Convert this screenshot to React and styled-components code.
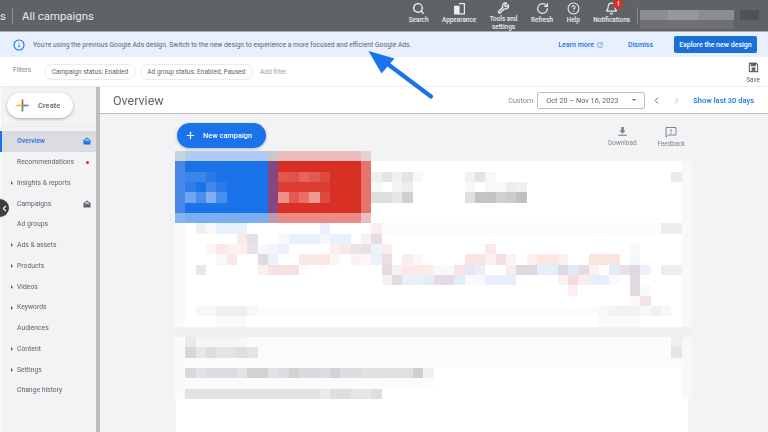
import styled, { createGlobalStyle } from 'styled-components';
import {
  Search, Wrench, RotateCw, CircleHelp, Bell, Info, SquareArrowOutUpRight,
  ChevronLeft, ChevronRight, Plus,
} from 'lucide-react';

const Global = createGlobalStyle`
  html, body { margin: 0; padding: 0; height: 432px; overflow: hidden; background: #fff; }
  * { box-sizing: border-box; }
`;

const Page = styled.div`
  position: relative;
  width: 768px;
  height: 432px;
  display: flex;
  flex-direction: column;
  overflow: hidden;
  font-family: Roboto, "Liberation Sans", sans-serif;
  color: #5f6368;
  filter: blur(0.6px);
`;

const TopBar = styled.header`
  height: 32px;
  flex: none;
  display: flex;
  align-items: stretch;
  background: #5f6368;
  border-bottom: 1px solid #a9acb0;
  color: #e8eaed;
`;

const Crumb = styled.div`
  display: flex;
  align-items: center;
  font-size: 11.4px;
  height: 31px;
`;

const CrumbCut = styled.span`
  width: 12px;
`;

const CrumbLine = styled.i`
  width: 1px;
  height: 16px;
  background: #8b8e92;
  margin-right: 9px;
`;

const TopActions = styled.nav`
  margin-left: auto;
  display: flex;
  gap: 13.5px;
  padding-top: 2px;
`;

const TopAction = styled.div`
  position: relative;
  display: flex;
  flex-direction: column;
  align-items: center;
  font-size: 6.4px;
  line-height: 7.5px;
  font-weight: 500;
  text-align: center;
  color: #eceef0;
  svg { margin-bottom: 2px; }
`;

const Badge = styled.b`
  position: absolute;
  top: -3px;
  left: 20px;
  width: 10px;
  height: 10px;
  border-radius: 50%;
  background: #d93025;
  color: #fff;
  font-size: 7px;
  line-height: 10px;
`;

const TopDivider = styled.i`
  width: 1px;
  height: 17px;
  margin: 7px 0 0 7px;
  background: #85888c;
`;

const Account = styled.svg`
  width: 130px;
  height: 24px;
  margin-top: 6px;
  flex: none;
`;

const Banner = styled.div`
  height: 25px;
  flex: none;
  display: flex;
  align-items: center;
  padding: 0 11px 0 13px;
  background: #e8f0fe;
  font-size: 6.75px;
`;

const BannerText = styled.span`
  margin-left: 8px;
  flex: 1;
`;

const BannerLink = styled.a`
  display: flex;
  align-items: center;
  gap: 3px;
  color: #1a73e8;
  font-size: 7px;
  font-weight: 500;
  margin-right: ${p => p.$gap}px;
`;

const PrimaryButton = styled.button`
  width: 83px;
  height: 17px;
  padding: 0;
  border: 0;
  border-radius: 2px;
  background: #1a6fd8;
  color: #fff;
  font: 500 7px Roboto, sans-serif;
`;

const FilterBar = styled.div`
  height: 30px;
  flex: none;
  display: flex;
  align-items: center;
  padding: 0 8px 0 13px;
  background: #fff;
  border-bottom: 1px solid #eceef0;
  font-size: 6.6px;
`;

const FilterLabel = styled.span`
  color: #80868b;
  margin: -3px 13px 0 0;
`;

const Chip = styled.span`
  height: 16px;
  display: flex;
  align-items: center;
  padding: 0 6.5px;
  margin-right: 4px;
  border: 1px solid #e8eaed;
  border-radius: 8px;
  white-space: nowrap;
`;

const AddFilter = styled.span`
  margin-left: 3px;
  color: #a0a4a8;
`;

const IconAction = styled.div`
  display: flex;
  flex-direction: column;
  align-items: center;
  gap: 2px;
  font-size: 6.4px;
  line-height: 8px;
  color: #80868b;
`;

const SaveAction = styled(IconAction)`
  margin-left: auto;
  gap: 3px;
  padding-top: 2px;
  color: #5f6368;
`;

const Body = styled.div`
  flex: 1;
  min-height: 0;
  display: flex;
`;

const Sidebar = styled.aside`
  position: relative;
  width: 100px;
  flex: none;
  padding-top: 6px;
  background: #f1f3f4;
  border-left: 1px solid #fafafa;
  border-right: 4px solid #bdbdbd;
`;

const CreateButton = styled.div`
  width: 66px;
  height: 25px;
  margin-left: 6px;
  display: flex;
  align-items: center;
  gap: 9px;
  padding-left: 9px;
  border-radius: 13px;
  background: #fff;
  box-shadow: 0 1px 3px rgba(60, 64, 67, 0.4);
  font-size: 7.6px;
  font-weight: 500;
`;

const NavList = styled.ul`
  list-style: none;
  margin: 8px 0 0;
  padding: 4px 0 0;
  border-top: 1px solid #e9ebec;
`;

const NavItem = styled.li`
  position: relative;
  height: 20.75px;
  display: flex;
  align-items: center;
  padding: 0 5px 0 16px;
  font-size: 6.8px;
  font-weight: ${p => (p.$active ? 500 : 400)};
  color: ${p => (p.$active ? '#1a73e8' : '#5f6368')};
  background: ${p => (p.$active ? '#dadce0' : 'transparent')};
  ${p => p.$active && `
    &::before {
      content: '';
      position: absolute;
      left: -1px;
      top: 0;
      bottom: 0;
      width: 2px;
      background: #1a73e8;
    }
  `}
`;

const Caret = styled.i`
  position: absolute;
  left: 10px;
  top: 8.5px;
  border-left: 2.5px solid #5f6368;
  border-top: 2px solid transparent;
  border-bottom: 2px solid transparent;
`;

const NavEnd = styled.span`
  margin-left: auto;
  display: flex;
  align-items: center;
`;

const Dot = styled.i`
  width: 3px;
  height: 3px;
  margin-right: 2px;
  border-radius: 50%;
  background: #d93025;
`;

const CollapseHandle = styled.div`
  position: absolute;
  left: -10px;
  top: 112px;
  width: 18px;
  height: 18px;
  display: flex;
  align-items: center;
  justify-content: flex-end;
  border-radius: 50%;
  background: #3c4043;
  color: #fff;
`;

const Main = styled.main`
  flex: 1;
  min-width: 0;
  display: flex;
  flex-direction: column;
  background: #f1f3f4;
`;

const MainHeader = styled.div`
  height: 27px;
  flex: none;
  display: flex;
  align-items: center;
  padding: 0 14px 0 13px;
  background: #fff;
  border-bottom: 1px solid #bdbdbd;
`;

const Title = styled.h1`
  margin: 0 auto 0 0;
  font-size: 12.5px;
  font-weight: 400;
  color: #5f6368;
`;

const DateHint = styled.span`
  font-size: 7.2px;
  color: #80868b;
  margin-right: 4px;
`;

const DateSelect = styled.div`
  width: 108px;
  height: 17px;
  display: flex;
  align-items: center;
  justify-content: space-between;
  padding: 0 8px;
  border: 1px solid #bdc1c6;
  border-radius: 2px;
  font-size: 7.3px;
`;

const SelectCaret = styled.i`
  border-top: 2.5px solid #5f6368;
  border-left: 2.5px solid transparent;
  border-right: 2.5px solid transparent;
`;

const Pager = styled.div`
  display: flex;
  gap: 9px;
  margin: 0 11px 0 6px;
  color: #5f6368;
  svg:last-child { color: #bdc1c6; }
`;

const LastDays = styled.a`
  font-size: 7.5px;
  font-weight: 500;
  color: #1a73e8;
`;

const Report = styled.section`
  flex: 1;
  min-height: 0;
  width: 517px;
  margin-left: 75px;
  display: flex;
  flex-direction: column;
`;

const ReportTools = styled.div`
  height: 37px;
  flex: none;
  display: flex;
  align-items: flex-start;
  padding: 9px 7px 0 2px;
`;

const NewCampaign = styled.div`
  width: 89px;
  height: 25px;
  display: flex;
  align-items: center;
  gap: 7px;
  padding-left: 8px;
  margin-right: auto;
  border-radius: 13px;
  background: #1a73e8;
  box-shadow: 0 1px 3px rgba(60, 64, 67, 0.35);
  color: #fff;
  font-size: 7.4px;
  font-weight: 500;
`;

const ToolGroup = styled.div`
  display: flex;
  gap: 21px;
  padding-top: 3px;
`;

const Mosaic = styled.svg`
  display: block;
  flex: none;
  width: 517px;
  height: 248px;
  filter: blur(0.4px);
`;

const ReportTail = styled.div`
  flex: 1;
  margin: 0 4px 0 1px;
  background: #fff;
`;

const Arrow = styled.svg`
  position: absolute;
  left: 360px;
  top: 44px;
  width: 80px;
  height: 60px;
`;

const mosaic = [
  [0, [[0, 1, '#c9d3e0'], [1, 8, '#b0ccf0'], [9, 1, '#c8c8c8'], [10, 8, '#ecbcbc'], [18, 1, '#e8d0d0'], [19, 31, '#f3f4f5']]],
  [1, [[0, 1, '#4a88e8'], [1, 8, '#1a73e8'], [9, 1, '#84477f'], [10, 8, '#d93025'], [18, 1, '#e8736b']]],
  [2, [[0, 1, '#4a88e8'], [1, 2, '#3b86ea'], [3, 1, '#2a7ae8'], [4, 5, '#1a73e8'], [9, 1, '#84477f'], [10, 1, '#e4574e'], [11, 1, '#e25249'], [12, 1, '#e5645b'], [13, 1, '#e35a50'], [14, 1, '#de4a40'], [15, 3, '#d93025'], [18, 1, '#e8736b'], [19, 1, '#f0f0f0'], [20, 1, '#e4e4e6'], [21, 1, '#f0f0f0'], [22, 1, '#e4e4e4'], [23, 1, '#f8f8f8'], [28, 1, '#f2f2f2'], [29, 1, '#e4e4e4'], [30, 1, '#f8f8f8'], [48, 1, '#ebebed']]],
  [3, [[0, 1, '#4a88e8'], [1, 1, '#2f7cea'], [2, 1, '#1a73e8'], [3, 1, '#3f87e8'], [4, 1, '#2a7ae8'], [5, 4, '#1a73e8'], [9, 1, '#84477f'], [10, 5, '#dc3d33'], [15, 3, '#d93025'], [18, 1, '#e8736b'], [19, 1, '#f8f8f8'], [21, 1, '#f3f3f3'], [22, 1, '#ededed'], [28, 1, '#f8f8f8'], [30, 2, '#f7f8f7'], [32, 1, '#eeeeee'], [33, 1, '#f0f0f0']]],
  [4, [[0, 1, '#4a88e8'], [1, 1, '#6fa5f0'], [2, 1, '#4a8eec'], [3, 1, '#80aff2'], [4, 1, '#4a8eec'], [5, 4, '#1a73e8'], [9, 1, '#84477f'], [10, 1, '#ee9088'], [11, 1, '#e45a50'], [12, 1, '#e87068'], [13, 1, '#ee9a90'], [14, 1, '#de4a40'], [15, 3, '#d93025'], [18, 1, '#e8736b'], [19, 2, '#dedede'], [21, 1, '#e6e6e6'], [22, 1, '#cfcfcf'], [28, 1, '#e0e0e2'], [29, 1, '#c4c4c6'], [30, 1, '#c4c2c2'], [31, 1, '#d0d0d2'], [32, 1, '#cccccc'], [33, 1, '#c0c0c4']]],
  [5, [[0, 1, '#4a88e8'], [1, 8, '#1a73e8'], [9, 1, '#84477f'], [10, 8, '#d93025'], [18, 1, '#e8736b']]],
  [6, [[0, 1, '#8ab4f0'], [1, 8, '#7baef3'], [9, 1, '#b99ab0'], [10, 8, '#ec8a84'], [18, 1, '#e8c0c0']]],
  [7, [[2, 1, '#f0f0f2'], [3, 1, '#f8f8f8'], [4, 3, '#e8f0fc'], [14, 1, '#eaf1fc'], [19, 1, '#fbeeee'], [20, 27, '#fcfcfc'], [47, 2, '#eeeef0']]],
  [8, [[6, 1, '#f8e8e6'], [7, 1, '#e4dfe3'], [10, 1, '#f8f8fc'], [11, 3, '#e8f0fc'], [14, 1, '#f4f6fc'], [15, 2, '#e8f0fc'], [18, 1, '#faf0f0'], [19, 1, '#e6dde0']]],
  [9, [[3, 1, '#fcf6f6'], [4, 1, '#fae8e6'], [5, 2, '#fcf0ee'], [7, 1, '#e8e2e6'], [8, 1, '#f8f9fc'], [9, 1, '#f2f6fc'], [10, 1, '#e8f0fc'], [15, 1, '#fceeee'], [16, 1, '#f8e8e6'], [17, 1, '#e8e4ec'], [18, 1, '#e8e0e4'], [19, 1, '#eef3fa'], [20, 1, '#fcecea'], [30, 1, '#fce8e6'], [44, 1, '#fcf8f8']]],
  [10, [[4, 1, '#f8f8f8'], [5, 1, '#fae8e6'], [8, 1, '#e0dade'], [9, 1, '#ecf2fc'], [12, 3, '#fae8e6'], [15, 1, '#fcf6f4'], [17, 1, '#fcf2f2'], [18, 1, '#fcf8f8'], [19, 1, '#eaf1fc'], [20, 1, '#ecdfe4'], [22, 1, '#fceeea'], [23, 1, '#fcf8f8'], [28, 2, '#f8e4e2'], [30, 1, '#fcf0ee'], [31, 1, '#f4dfe2'], [32, 1, '#fcf4f2'], [34, 1, '#fcf0ee'], [35, 2, '#fce6e2'], [37, 1, '#fcf0ec'], [40, 3, '#fae4e0'], [44, 1, '#f4f7fe']]],
  [11, [[2, 1, '#e8e8ea'], [8, 1, '#fcf0ee'], [9, 3, '#f4e2e2'], [12, 1, '#fcfcfc'], [20, 1, '#e4dce0'], [21, 1, '#faf0f0'], [22, 2, '#fce8e6'], [24, 1, '#fcecea'], [25, 2, '#f8f9fc'], [27, 1, '#f8e4e4'], [28, 1, '#e4e8f4'], [29, 1, '#e8effc'], [32, 1, '#f8ecec'], [33, 2, '#e0d8e0'], [35, 2, '#e4eefc'], [37, 1, '#e0dae0'], [38, 1, '#e0eafc'], [39, 1, '#e4dce4'], [40, 1, '#fcf0ee'], [42, 1, '#e4ecf8'], [43, 1, '#e8e0e4'], [44, 1, '#e0d8da'], [45, 1, '#ecf2fc'], [47, 2, '#eeeeee']]],
  [12, [[20, 1, '#faf0f0'], [21, 1, '#e4dce0'], [22, 2, '#e8f0fc'], [24, 1, '#e4ecf8'], [25, 2, '#e4dce4'], [27, 1, '#e4eefa'], [28, 2, '#fafafe'], [30, 3, '#e6effc'], [37, 1, '#fcf0f0'], [38, 1, '#f4dcdc'], [39, 1, '#fcecec'], [40, 2, '#e6effc'], [42, 1, '#f8fafe'], [44, 1, '#e2dae2']]],
  [13, [[38, 1, '#fcf0f0'], [44, 1, '#e2dae2'], [45, 1, '#f8fafe']]],
  [14, [[44, 1, '#fcf8f8'], [45, 1, '#f4e4e6']]],
  [15, [[2, 2, '#f6f8f6'], [4, 3, '#eeeff1'], [7, 1, '#f6f8f6'], [8, 33, '#fcfcfc'], [41, 1, '#f8f8f8'], [42, 3, '#f2f2f2'], [45, 1, '#f6f8f8'], [46, 1, '#eef0f2'], [47, 1, '#f6f8f8']]],
  [16, [[4, 3, '#f8f9f8'], [41, 4, '#f8f9f8']]],
  [17, [[0, 50, '#eef0f2']]],
  [18, [[1, 1, '#eaeaec'], [2, 5, '#f6f6f8'], [7, 41, '#fafbfa'], [48, 1, '#eeeef0']]],
  [19, [[1, 1, '#d8d8dc'], [2, 1, '#e8e8ea'], [3, 1, '#dcdce2'], [4, 2, '#e4e4e4'], [6, 1, '#dedede'], [7, 1, '#e4e4e6'], [8, 40, '#fafbfa'], [48, 1, '#e6e6ea']]],
  [20, [[1, 48, '#fbfbfb']]],
  [21, [[1, 1, '#d8d8e0'], [2, 1, '#e4e4e6'], [3, 3, '#dcdce2'], [6, 1, '#e4e4e4'], [7, 2, '#d4d0d4'], [9, 1, '#e4e4e6'], [10, 1, '#dcdce2'], [11, 1, '#d4d0d4'], [12, 2, '#dcdae0'], [14, 1, '#dcdce2'], [15, 1, '#d8d0d4'], [16, 2, '#dcdce2'], [18, 2, '#e2e2e2'], [20, 3, '#e0e0e0'], [23, 1, '#cfcfd2'], [24, 1, '#f0f0f2']]],
  [22, [[1, 24, '#fbfbfb']]],
  [23, [[1, 13, '#e2e2e2'], [14, 1, '#eaeaea'], [15, 2, '#dedede'], [17, 2, '#e6e6e6'], [19, 1, '#dedede']]],
];

const navItems = [
  { label: 'Overview', active: true, end: 'home' },
  { label: 'Recommendations', end: 'dot' },
  { label: 'Insights & reports', caret: true },
  { label: 'Campaigns', end: 'home' },
  { label: 'Ad groups' },
  { label: 'Ads & assets', caret: true },
  { label: 'Products', caret: true },
  { label: 'Videos', caret: true },
  { label: 'Keywords', caret: true },
  { label: 'Audiences' },
  { label: 'Content', caret: true },
  { label: 'Settings', caret: true },
  { label: 'Change history' },
];

function HomeIcon() {
  return (
    <svg width="8" height="8" viewBox="0 0 16 16" fill="currentColor">
      <path d="M8 1 1 6.500V15h14V6.500L8 1Zm0 3a3.500 3.500 0 0 1 3.500 3.500V9h-7V7.500A3.500 3.500 0 0 1 8 4Z" fillRule="evenodd" />
      <circle cx="8" cy="8.500" r="1.800" />
    </svg>
  );
}

function GooglePlus() {
  return (
    <svg width="13" height="13" viewBox="0 0 26 26" fill="none" strokeWidth="3.400">
      <path d="M13 1v12" stroke="#ea4335" />
      <path d="M13 13v12" stroke="#34a853" />
      <path d="M1 13h12" stroke="#fbbc04" />
      <path d="M13 13h12" stroke="#4285f4" />
    </svg>
  );
}

function AppearanceIcon() {
  return (
    <svg width="13" height="13" viewBox="0 0 24 24" fill="none" stroke="currentColor" strokeWidth="2.200">
      <rect x="3" y="8" width="8" height="14" fill="currentColor" />
      <path d="M11 3h10v19H11" />
    </svg>
  );
}

function SaveIcon() {
  return (
    <svg width="11" height="11" viewBox="0 0 24 24" fill="none" stroke="currentColor" strokeWidth="2.400">
      <path d="M3 3h15l3 3v15H3V3Z" />
      <path d="M7 3h9v5H7z" fill="currentColor" />
      <rect x="9" y="13" width="6" height="5" fill="currentColor" />
    </svg>
  );
}

function DownloadIcon() {
  return (
    <svg width="11" height="11" viewBox="0 0 24 24" fill="currentColor">
      <path d="M9 2h6v8h4l-7 7-7-7h4V2Z" />
      <path d="M3 19h18v2.500H3z" />
    </svg>
  );
}

function FeedbackIcon() {
  return (
    <svg width="12" height="12" viewBox="0 0 24 24" fill="none" stroke="currentColor" strokeWidth="2">
      <path d="M2 3h20v15H7l-5 4V3Z" />
      <path d="M12 6.500v6M12 14v2" />
    </svg>
  );
}

export default function App() {
  return (
    <Page>
      <Global />
      <TopBar>
        <Crumb>
          <CrumbCut>s</CrumbCut>
          <CrumbLine />
          All campaigns
        </Crumb>
        <TopActions>
          <TopAction><Search size={13} strokeWidth={2.6} />Search</TopAction>
          <TopAction><AppearanceIcon />Appearance</TopAction>
          <TopAction><Wrench size={13} strokeWidth={2.6} />Tools and<br />settings</TopAction>
          <TopAction><RotateCw size={13} strokeWidth={2.2} />Refresh</TopAction>
          <TopAction><CircleHelp size={13} strokeWidth={2} />Help</TopAction>
          <TopAction>
            <Bell size={13} strokeWidth={2.2} />
            <Badge>!</Badge>
            Notifications
          </TopAction>
        </TopActions>
        <TopDivider />
        <Account viewBox="0 0 130 24" shapeRendering="crispEdges">
          <rect x="2" y="4" width="94" height="10" fill="#8b8d91" />
          <rect x="2" y="14" width="94" height="9" fill="#6e7074" />
          <rect x="30" y="4" width="30" height="10" fill="#96989c" />
          <rect x="102" y="4" width="19" height="10" fill="#505256" />
        </Account>
      </TopBar>

      <Banner>
        <Info size={12} color="#1a73e8" strokeWidth={2.2} />
        <BannerText>
          You're using the previous Google Ads design. Switch to the new design to experience a more focused and efficient Google Ads.
        </BannerText>
        <BannerLink $gap={25}>
          Learn more <SquareArrowOutUpRight size={6} />
        </BannerLink>
        <BannerLink $gap={21}>Dismiss</BannerLink>
        <PrimaryButton>Explore the new design</PrimaryButton>
      </Banner>

      <FilterBar>
        <FilterLabel>Filters</FilterLabel>
        <Chip>Campaign status: Enabled</Chip>
        <Chip>Ad group status: Enabled, Paused</Chip>
        <AddFilter>Add filter</AddFilter>
        <SaveAction><SaveIcon />Save</SaveAction>
      </FilterBar>

      <Body>
        <Sidebar>
          <CreateButton><GooglePlus />Create</CreateButton>
          <NavList>
            {navItems.map(item => (
              <NavItem key={item.label} $active={item.active}>
                {item.caret && <Caret />}
                {item.label}
                {item.end === 'home' && <NavEnd><HomeIcon /></NavEnd>}
                {item.end === 'dot' && <NavEnd><Dot /></NavEnd>}
              </NavItem>
            ))}
          </NavList>
          <CollapseHandle><ChevronLeft size={9} strokeWidth={3} /></CollapseHandle>
        </Sidebar>

        <Main>
          <MainHeader>
            <Title>Overview</Title>
            <DateHint>Custom</DateHint>
            <DateSelect>Oct 20 – Nov 16, 2023<SelectCaret /></DateSelect>
            <Pager>
              <ChevronLeft size={11} />
              <ChevronRight size={11} />
            </Pager>
            <LastDays>Show last 30 days</LastDays>
          </MainHeader>

          <Report>
            <ReportTools>
              <NewCampaign><Plus size={11} strokeWidth={2.6} />New campaign</NewCampaign>
              <ToolGroup>
                <IconAction><DownloadIcon />Download</IconAction>
                <IconAction><FeedbackIcon />Feedback</IconAction>
              </ToolGroup>
            </ReportTools>
            <Mosaic viewBox="0 0 50 24" preserveAspectRatio="none" shapeRendering="crispEdges">
              <rect width="50" height="24" fill="#fff" />
              <rect y="7" width="1" height="17" fill="#fafafa" />
              <rect x="49" y="1" width="1" height="23" fill="#f8f8f8" />
              {mosaic.map(([row, cells]) =>
                cells.map(([col, span, fill]) => (
                  <rect key={`${row}-${col}`} x={col} y={row} width={span} height="1" fill={fill} />
                ))
              )}
            </Mosaic>
            <ReportTail />
          </Report>
        </Main>
      </Body>

      <Arrow viewBox="360 44 80 60">
        <path d="M431 96.500 385 62" stroke="#1a73e8" strokeWidth="4.200" strokeLinecap="round" />
        <path d="M368.500 51 394.500 58.500 381.500 73.500Z" fill="#1a73e8" />
      </Arrow>
    </Page>
  );
}
